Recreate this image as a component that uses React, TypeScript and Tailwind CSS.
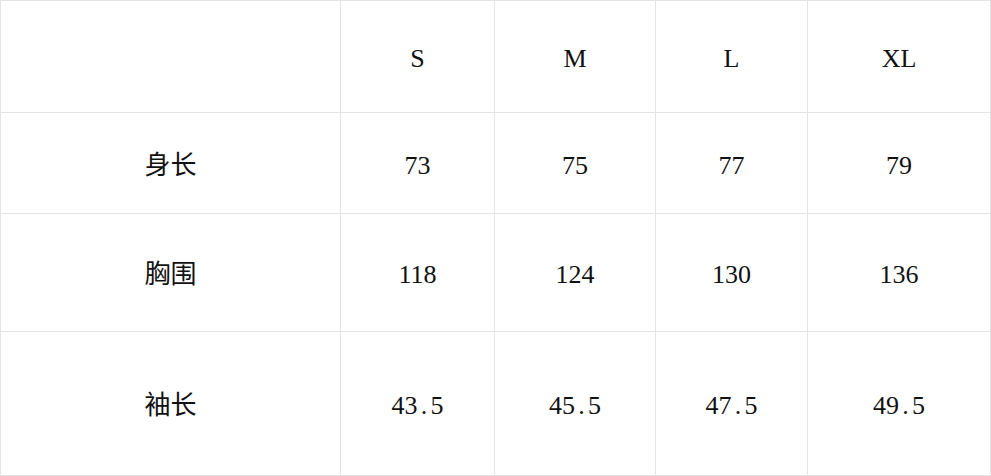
const sizes = ['S', 'M', 'L', 'XL'];

const rows = [
  { label: '身长', values: ['73', '75', '77', '79'], h: 'h-[101px]' },
  { label: '胸围', values: ['118', '124', '130', '136'], h: 'h-[118px]' },
  { label: '袖长', values: ['43.5', '45.5', '47.5', '49.5'], h: 'h-[144px]' },
];

const cell = 'flex items-center justify-center border-r border-b border-[#e4e4e4] pt-1';

// the period takes a full half-width slot, like the monospaced original
function Num({ v }: { v: string }) {
  const [a, b] = v.split('.');
  if (b === undefined) return <span>{a}</span>;
  return (
    <span>
      {a}
      <span className="inline-block w-[13px] text-center">.</span>
      {b}
    </span>
  );
}

export default function App() {
  return (
    <div className="w-[991px] h-[476px] bg-white text-[26px] text-[#111] font-['Liberation_Serif','Noto_Sans_CJK_SC',serif]">
      <div className="grid grid-cols-[340px_154px_161px_152px_183px] border-l border-t border-[#e4e4e4]">
        <div className={`${cell} h-[112px]`} />
        {sizes.map(s => (
          <div key={s} className={`${cell} h-[112px]`}>{s}</div>
        ))}
        {rows.map(row => (
          <>
            <div key={row.label} className={`${cell} ${row.h}`}>{row.label}</div>
            {row.values.map((v, i) => (
              <div key={row.label + i} className={`${cell} ${row.h}`}>
                <Num v={v} />
              </div>
            ))}
          </>
        ))}
      </div>
    </div>
  );
}
